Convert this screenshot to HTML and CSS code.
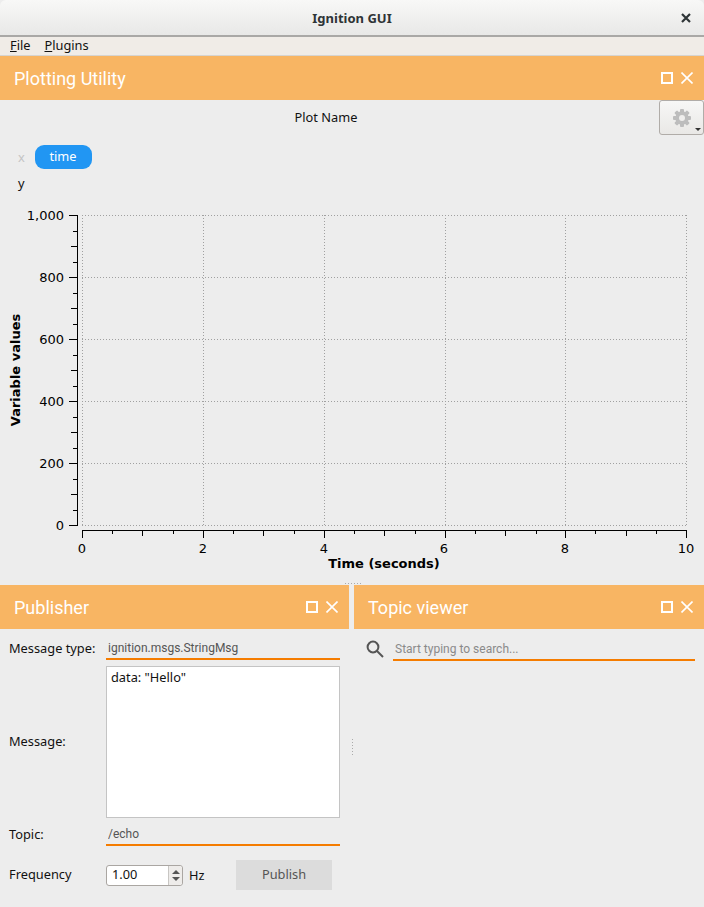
FILE: index.html
```html
<!DOCTYPE html>
<html>
<head>
<meta charset="utf-8">
<title>Ignition GUI</title>
<link rel="stylesheet" href="styles.css">
</head>
<body>
<div class="window">
	<header class="titlebar">
		<span class="title">Ignition GUI</span>
		<svg class="close-win" width="10" height="10" viewBox="0 0 10 10"><path d="M1 1 L9 9 M9 1 L1 9"/></svg>
	</header>

	<nav class="menubar">
		<span class="menu-item"><u>F</u>ile</span>
		<span class="menu-item"><u>P</u>lugins</span>
	</nav>

	<section class="plot-panel">
		<div class="card-head">
			<span class="card-title">Plotting Utility</span>
			<span class="btn-max"></span>
			<svg class="btn-close" width="12" height="12" viewBox="0 0 12 12"><path d="M0.5 0.5 L11.5 11.5 M11.5 0.5 L0.5 11.5"/></svg>
		</div>
		<div class="plot-toolbar">
			<div class="plot-name">Plot Name</div>
			<div class="gear-btn">
				<svg width="18" height="18" viewBox="0 0 18 18">
					<g fill="#bdbdbd">
						<rect x="7" y="0" width="4" height="18" rx="1"/>
						<rect x="7" y="0" width="4" height="18" rx="1" transform="rotate(45 9 9)"/>
						<rect x="7" y="0" width="4" height="18" rx="1" transform="rotate(90 9 9)"/>
						<rect x="7" y="0" width="4" height="18" rx="1" transform="rotate(135 9 9)"/>
					</g>
					<circle cx="9" cy="9" r="5" fill="none" stroke="#bdbdbd" stroke-width="3.4"/>
					<circle cx="9" cy="9" r="3" fill="#efeeed"/>
				</svg>
				<span class="gear-arrow"></span>
			</div>
		</div>
		<div class="axis-row">
			<span class="axis-x">x</span>
			<span class="pill">time</span>
		</div>
		<div class="axis-y">y</div>

		<svg class="chart" width="704" height="381" viewBox="0 200 704 381">
			<g class="grid">
				<path d="M82 215.5 H687 M82 277.5 H687 M82 339.5 H687 M82 401.5 H687 M82 463.5 H687 M82 525.5 H687"/>
				<path d="M82.5 215 V525 M203.5 215 V525 M324.5 215 V525 M445.5 215 V525 M565.5 215 V525 M686.5 215 V525"/>
			</g>
			<g class="axis">
				<path d="M77.5 215 V526 M69 215.5 H77 M69 277.5 H77 M69 339.5 H77 M69 401.5 H77 M69 463.5 H77 M69 525.5 H77"/>
				<path d="M73 231.5 H77 M71 246.5 H77 M73 262.5 H77 M73 293.5 H77 M71 308.5 H77 M73 324.5 H77 M73 355.5 H77 M71 370.5 H77 M73 386.5 H77 M73 417.5 H77 M71 432.5 H77 M73 448.5 H77 M73 479.5 H77 M71 494.5 H77 M73 510.5 H77"/>
				<path d="M82 530.5 H687 M82.5 530 V538 M203.5 530 V538 M324.5 530 V538 M445.5 530 V538 M565.5 530 V538 M686.5 530 V538"/>
				<path d="M112.5 530 V534 M142.5 530 V536 M173.5 530 V534 M233.5 530 V534 M263.5 530 V536 M294.5 530 V534 M354.5 530 V534 M384.5 530 V536 M415.5 530 V534 M475.5 530 V534 M505.5 530 V536 M536.5 530 V534 M595.5 530 V534 M626.5 530 V536 M656.5 530 V534"/>
			</g>
			<g class="tick-y">
				<text x="64" y="220">1,000</text>
				<text x="64" y="282">800</text>
				<text x="64" y="344">600</text>
				<text x="64" y="406">400</text>
				<text x="64" y="468">200</text>
				<text x="64" y="530">0</text>
			</g>
			<g class="tick-x">
				<text x="82" y="553">0</text>
				<text x="203" y="553">2</text>
				<text x="324" y="553">4</text>
				<text x="444" y="553">6</text>
				<text x="565" y="553">8</text>
				<text x="686" y="553">10</text>
			</g>
			<text class="axis-title" x="384" y="568">Time (seconds)</text>
			<text class="axis-title" transform="translate(20 370) rotate(-90)">Variable values</text>
		</svg>
		<div class="split-dots"></div>
	</section>

	<div class="bottom">
		<section class="publisher">
			<div class="card-head">
				<span class="card-title">Publisher</span>
				<span class="btn-max"></span>
				<svg class="btn-close" width="12" height="12" viewBox="0 0 12 12"><path d="M0.5 0.5 L11.5 11.5 M11.5 0.5 L0.5 11.5"/></svg>
			</div>
			<div class="pub-form">
				<label class="pub-label">Message type:</label>
				<input class="line-input" type="text" value="ignition.msgs.StringMsg">
				<label class="pub-label msg-label">Message:</label>
				<textarea class="msg-box">data: "Hello"</textarea>
				<label class="pub-label">Topic:</label>
				<input class="line-input" type="text" value="/echo">
				<label class="pub-label freq-label">Frequency</label>
				<div class="freq-row">
					<div class="spin">
						<span class="spin-val">1.00</span>
						<span class="spin-btns">
							<span class="arrow-up"></span>
							<span class="arrow-down"></span>
						</span>
					</div>
					<span class="hz">Hz</span>
					<div class="publish-btn">Publish</div>
				</div>
			</div>
		</section>

		<div class="v-split"><span class="v-dots"></span></div>

		<section class="topics">
			<div class="card-head">
				<span class="card-title">Topic viewer</span>
				<span class="btn-max"></span>
				<svg class="btn-close" width="12" height="12" viewBox="0 0 12 12"><path d="M0.5 0.5 L11.5 11.5 M11.5 0.5 L0.5 11.5"/></svg>
			</div>
			<div class="search-row">
				<svg class="search-icon" width="18" height="18" viewBox="0 0 18 18"><circle cx="7" cy="7" r="5.4"/><path d="M11 11 L17 17"/></svg>
				<input class="line-input search-input" type="text" placeholder="Start typing to search...">
			</div>
		</section>
	</div>
</div>
</body>
</html>
```

FILE: styles.css
```css
* {
    margin: 0;
    padding: 0;
    box-sizing: border-box;
}

body {
    font-family: 'Noto Sans', sans-serif;
    font-size: 12.8px;
    color: #111;
    background: #fff;
}

.window {
    width: 704px;
    height: 907px;
    display: flex;
    flex-direction: column;
    overflow: hidden;
    background-color: #ededed;
}

/* title bar + menu */
.titlebar {
    height: 37px;
    flex: none;
    display: flex;
    justify-content: center;
    align-items: center;
    position: relative;
    border-radius: 6px 6px 0 0;
    border-bottom: 2px solid #a9a8a6;
    background: linear-gradient(#f8f8f7, #e8e8e7);
}

.title {
    font-size: 13px;
    font-weight: bold;
    color: #2e3436;
}

.close-win {
    position: absolute;
    right: 13px;
    top: 13px;
    fill: none;
    stroke: #2e3436;
    stroke-width: 2.2;
}

.menubar {
    height: 19px;
    flex: none;
    display: flex;
    gap: 14px;
    align-items: center;
    padding: 0 0 2px 10px;
    background-color: #f0ece7;
    border-bottom: 1px solid #d6d4d1;
}

/* orange card header */
.card-head {
    height: 44px;
    flex: none;
    display: flex;
    align-items: center;
    padding: 0 11px 0 14px;
    background-color: #f8b563;
    color: #fff;
}

.card-title {
    flex: 1;
    font-family: Roboto, sans-serif;
    font-size: 18px;
}

.btn-max {
    width: 12px;
    height: 12px;
    margin-right: 8px;
    border: 2px solid #fff;
}

.btn-close {
    fill: none;
    stroke: #fff;
    stroke-width: 1.6;
}

/* plot */
.plot-panel {
    height: 529px;
    flex: none;
    display: flex;
    flex-direction: column;
    position: relative;
}

.plot-toolbar {
    height: 35px;
    flex: none;
    display: flex;
    align-items: flex-start;
}

.plot-name {
    flex: 1;
    text-align: center;
    padding: 8px 7px 0 0;
}

.gear-btn {
    width: 45px;
    height: 35px;
    display: flex;
    justify-content: center;
    align-items: center;
    position: relative;
    border: 1px solid #b0aca8;
    border-radius: 3px;
    background: linear-gradient(#f7f7f6, #e9e8e6);
}

.gear-arrow {
    position: absolute;
    right: 2px;
    bottom: 3px;
    border-left: 3px solid transparent;
    border-right: 3px solid transparent;
    border-top: 3px solid #333;
}

.axis-row {
    margin-top: 10px;
    height: 24px;
    flex: none;
    display: flex;
    align-items: center;
    padding-left: 18px;
}

.axis-x {
    width: 17px;
    color: #c4c4c4;
}

.pill {
    width: 57px;
    height: 24px;
    line-height: 23px;
    padding-right: 1px;
    text-align: center;
    color: #fff;
    border-radius: 9px;
    background-color: #2196f3;
}

.axis-y {
    height: 31px;
    flex: none;
    padding: 5px 0 0 18px;
}

.chart {
    display: block;
    flex: none;
}

.grid path {
    fill: none;
    stroke: #a0a0a0;
    stroke-dasharray: 1 2;
}

.axis path {
    fill: none;
    stroke: #000;
}

.chart text {
    font-family: 'DejaVu Sans', sans-serif;
    font-size: 13px;
    fill: #000;
}

.tick-y text {
    text-anchor: end;
}

.tick-x text {
    text-anchor: middle;
}

.chart .axis-title {
    font-weight: bold;
    text-anchor: middle;
}

.split-dots {
    position: absolute;
    left: 345px;
    bottom: 1px;
    width: 16px;
    height: 1px;
    background-image: repeating-linear-gradient(90deg, #aaa 0 1px, transparent 1px 3px);
}

/* bottom panels */
.bottom {
    flex: 1;
    display: flex;
}

.publisher {
    width: 349px;
    flex: none;
}

.v-split {
    width: 5px;
    flex: none;
    position: relative;
}

.v-dots {
    position: absolute;
    left: 3px;
    top: 154px;
    width: 1px;
    height: 16px;
    background-image: repeating-linear-gradient(#aaa 0 1px, transparent 1px 3px);
}

.topics {
    flex: 1;
}

.pub-form {
    display: grid;
    grid-template-columns: 97px 234px;
    grid-template-rows: 31px 158px 28px 44px;
    padding-left: 9px;
}

.pub-label {
    align-self: end;
    padding-bottom: 3px;
}

.pub-form .msg-label {
    align-self: center;
    padding: 4px 0 0;
}

.pub-form .freq-label {
    padding-bottom: 7px;
}

.line-input {
    width: 100%;
    height: 24px;
    padding: 1px 1px 0 2px;
    align-self: end;
    font-family: Roboto, sans-serif;
    font-size: 12px;
    color: #555;
    background: transparent;
    border: none;
    border-bottom: 2px solid #f57c00;
    outline: none;
}

.msg-box {
    margin-top: 6px;
    padding: 1px 4px;
    resize: none;
    overflow: hidden;
    font-family: 'Noto Sans', sans-serif;
    font-size: 12.8px;
    color: #111;
    background-color: #fff;
    border: 1px solid #c4c4c4;
    outline: none;
}

.freq-row {
    height: 30px;
    align-self: end;
    display: flex;
    align-items: center;
}

.spin {
    width: 77px;
    height: 21px;
    display: flex;
    line-height: 17px;
    border: 1px solid #aaa6a2;
    border-radius: 3px;
    background-color: #fff;
}

.spin-val {
    flex: 1;
    padding-left: 5px;
}

.spin-btns {
    width: 14px;
    display: flex;
    flex-direction: column;
    justify-content: center;
    align-items: center;
    gap: 3px;
    border-left: 1px solid #c8c6c3;
    background-color: #eeecea;
    border-radius: 0 3px 3px 0;
}

.arrow-up {
    border-left: 4px solid transparent;
    border-right: 4px solid transparent;
    border-bottom: 4px solid #555;
}

.arrow-down {
    border-left: 4px solid transparent;
    border-right: 4px solid transparent;
    border-top: 4px solid #555;
}

.hz {
    margin-left: 6px;
    width: 47px;
}

.publish-btn {
    width: 96px;
    height: 30px;
    line-height: 29px;
    text-align: center;
    color: #555;
    background-color: #dcdcdc;
}

.search-row {
    display: flex;
    align-items: flex-end;
    height: 32px;
    padding: 0 9px 0 12px;
}

.search-icon {
    flex: none;
    margin: 0 9px 3px 0;
    fill: none;
    stroke: #555;
    stroke-width: 2;
}

.search-input {
    flex: 1;
    width: auto;
}

.search-input::placeholder {
    color: #8a8a8a;
    opacity: 1;
}
```
